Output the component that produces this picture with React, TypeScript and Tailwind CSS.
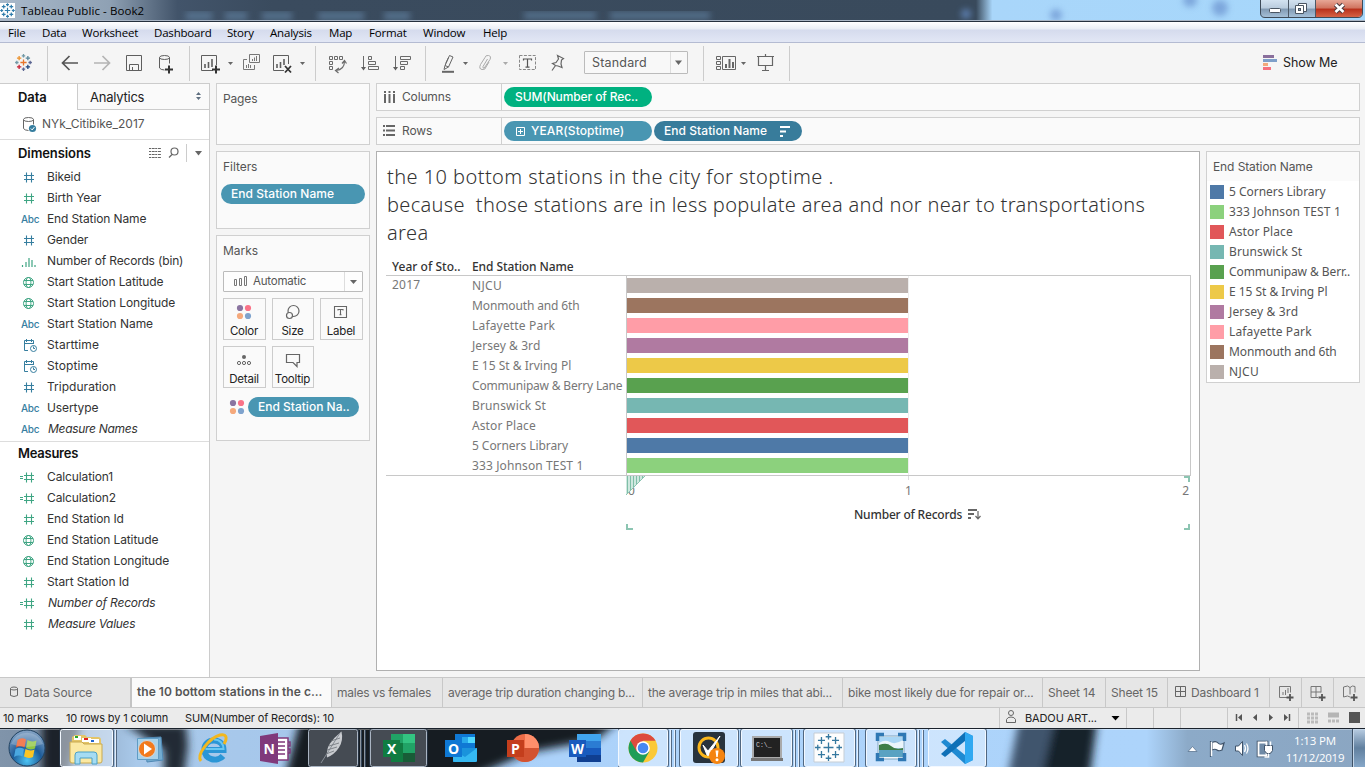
import type { ReactNode } from 'react';

type DrawProps = { x: number; y: number; w: number; h: number; className?: string; children?: ReactNode };

/** Inline drawing whose viewBox is expressed in window coordinates. */
function Draw({ x, y, w, h, className = '', children }: DrawProps) {
  return (
    <svg width={w} height={h} viewBox={`${x} ${y} ${w} ${h}`} fill="none" className={`block shrink-0 ${className}`}>
      {children}
    </svg>
  );
}

const G = '#666';

/* ---------- title bar and menu ---------- */

function TableauCross({ cx, cy, s, colors, w = 1 }: { cx: number; cy: number; s: number; colors: string[]; w?: number }) {
  const pts = [
    [0, 0, 1.35], [0, -2.9, 0.75], [0, 2.9, 0.75], [-2.9, 0, 0.75], [2.9, 0, 0.75],
    [-1.9, -1.9, 0.95], [1.9, -1.9, 0.95], [-1.9, 1.9, 0.95], [1.9, 1.9, 0.95],
  ];
  return (
    <>
      {pts.map(([x, y, r], i) => (
        <path
          key={i}
          d={`M${cx + x * s - r * s} ${cy + y * s}h${2 * r * s}M${cx + x * s} ${cy + y * s - r * s}v${2 * r * s}`}
          stroke={colors[i % colors.length]}
          strokeWidth={w}
        />
      ))}
    </>
  );
}

function TitleBar() {
  return (
    <div className="relative flex h-[21px] shrink-0 overflow-hidden border-b border-[#a9b5c4] bg-[#394a5c]">
      <Draw x={0} y={0} w={1365} h={21} className="absolute inset-0">
        <defs>
          <linearGradient id="tb" x1="0" x2="1365" y1="0" y2="0" gradientUnits="userSpaceOnUse">
            <stop offset="0" stopColor="#a9b9ca" />
            <stop offset=".08" stopColor="#8fa1b4" />
            <stop offset=".13" stopColor="#42546a" />
            <stop offset=".2" stopColor="#3a4b5e" />
            <stop offset=".715" stopColor="#394a5c" />
            <stop offset=".727" stopColor="#a9d6fa" />
            <stop offset="1" stopColor="#a6d7fb" />
          </linearGradient>
          <linearGradient id="cb" x1="0" x2="0" y1="0" y2="18" gradientUnits="userSpaceOnUse">
            <stop offset="0" stopColor="#d3e2f0" />
            <stop offset=".45" stopColor="#b9cbdd" />
            <stop offset=".5" stopColor="#8199b2" />
            <stop offset="1" stopColor="#a9c4dc" />
          </linearGradient>
          <linearGradient id="cx" x1="0" x2="0" y1="0" y2="18" gradientUnits="userSpaceOnUse">
            <stop offset="0" stopColor="#e7a796" />
            <stop offset=".45" stopColor="#d0735f" />
            <stop offset=".5" stopColor="#b8301b" />
            <stop offset="1" stopColor="#d9694a" />
          </linearGradient>
          <filter id="soft"><feGaussianBlur stdDeviation="3" /></filter>
        </defs>
        <rect width="1365" height="21" fill="url(#tb)" />
        <g filter="url(#soft)" fill="#5f7f9e" opacity=".75">
          <rect x="186" y="12" width="26" height="8" /><rect x="225" y="12" width="22" height="8" /><rect x="262" y="12" width="30" height="8" />
          <rect x="318" y="12" width="46" height="8" /><rect x="384" y="12" width="26" height="8" /><rect x="524" y="12" width="72" height="7" />
          <rect x="610" y="12" width="100" height="7" />
        </g>
        <g filter="url(#soft)" fill="#6b93cf" opacity=".7">
          <circle cx="1056" cy="15" r="6" /><circle cx="1190" cy="0" r="7" /><circle cx="1220" cy="8" r="8" /><circle cx="966" cy="14" r="5" />
        </g>
        <path d="M1260.500 0V13q0 4.500 4.500 4.500H1358q4.500 0 4.500-4.500V0" fill="url(#cb)" stroke="#3d4a58" />
        <path d="M1316 0V17h42q4-.5 4-4V0Z" fill="url(#cx)" />
        <path d="M1288.500 0v17M1315.500 0v17" stroke="#4c5866" />
        <rect x="1269.500" y="8.500" width="11" height="4" rx="1" fill="#fff" stroke="#4a5562" />
        <path d="M1298.500 3.500h8v8h-8Z" fill="#fff" stroke="#4a5562" />
        <path d="M1295.500 5.500h8v8h-8Z" fill="#fff" stroke="#4a5562" />
        <rect x="1298.500" y="8.500" width="2" height="2" fill="#8fa5ba" stroke="#4a5562" />
        <path d="M1335.500 4.500l8 7.500M1343.500 4.500l-8 7.500" stroke="#4a3b40" strokeWidth="4.600" />
        <path d="M1335.500 4.500l8 7.500M1343.500 4.500l-8 7.500" stroke="#fff" strokeWidth="2.600" />
        <rect x="0" y="3" width="15" height="15" fill="#fff" />
        <TableauCross cx={7.500} cy={10.500} s={2} colors={['#2f7cab']} w={1.200} />
      </Draw>
      <span className="relative ml-[21px] h-[21px] font-['Open_Sans'] text-[11.500px] leading-[21px] tracking-[0.080px] text-black">Tableau Public - Book2</span>
    </div>
  );
}

const menus: [string, string][] = [
  ['File', 'w-[34px]'], ['Data', 'w-[40px]'], ['Worksheet', 'w-[72px]'], ['Dashboard', 'w-[73px]'], ['Story', 'w-[43px]'],
  ['Analysis', 'w-[59px]'], ['Map', 'w-[40px]'], ['Format', 'w-[54px]'], ['Window', 'w-[60px]'], ['Help', 'w-[40px]'],
];

function MenuBar() {
  return (
    <div className="flex h-[22px] shrink-0 items-center border-t border-b border-t-[#25303d] border-b-[#b4bbd2] bg-[linear-gradient(#ffffff_0px,#e9edf5_7px,#d5dbed_8px,#e2e7f5_20px)] pt-[2px] pl-[8px] font-['Open_Sans'] text-[11.500px] tracking-[-0.190px] text-black">
      {menus.map(([m, w]) => (
        <span key={m} className={w}>{m}</span>
      ))}
    </div>
  );
}

/* ---------- toolbar ---------- */

function Caret({ x, y, c = G }: { x: number; y: number; c?: string }) {
  return <path d={`M${x} ${y}h5l-2.500 3Z`} fill={c} />;
}

function Toolbar() {
  return (
    <div className="flex h-[40px] shrink-0 bg-[#f5f5f5]">
      <Draw x={0} y={43} w={48} h={40}>
        <TableauCross cx={23.500} cy={62.500} s={2.300} w={1.300} colors={['#e8762c', '#7199a6', '#5c6692', '#7199a6', '#5b6591', '#eb912c', '#59879b', '#c72035', '#1f447e']} />
        <path d="M47.500 46v35" stroke="#ccc" />
      </Draw>
      <Draw x={48} y={43} w={142} h={40}>
        <path d="M78 63H63M69.500 56l-7 7 7 7" stroke="#555" strokeWidth="1.700" />
        <path d="M94 63h15M102.500 56l7 7-7 7" stroke="#b4b4b4" strokeWidth="1.700" />
        <path d="M126.500 55.500h15v15h-15ZM129.500 70v-5.500h9V70M132.500 67v3" stroke="#5e5e5e" />
        <ellipse cx="164.500" cy="57.500" rx="5" ry="2" stroke="#5e5e5e" />
        <path d="M159.500 57.500V68q1 1.800 5 2M169.500 57.500v6" stroke="#5e5e5e" />
        <path d="M165 69.500h8M169 65.500v8" stroke="#333" strokeWidth="2" />
        <path d="M189.500 46v35" stroke="#ccc" />
      </Draw>
      <Draw x={190} y={43} w={126} h={40}>
        <path d="M213 70.500H201.500v-15h15V65" stroke="#5e5e5e" />
        <path d="M205 64v4M208.500 62v6M212 59v8" stroke="#5e5e5e" strokeWidth="1.600" />
        <path d="M212 69.500h8M216 65.500v8" stroke="#333" strokeWidth="2" />
        <Caret x={228} y={62} />
        <path d="M249.500 54.500h10v8h-10ZM247 59.500h-3.500v10h11V65" stroke="#777" />
        <path d="M252.500 59v2M254.500 57.500v3.500M256.500 56v5M246.500 65v3M248.500 64v4M250.500 65v3" stroke="#777" />
        <path d="M284 70.500H273.500v-15h15V64" stroke="#5e5e5e" />
        <path d="M277 64v4M280.500 62v6M284 59v6" stroke="#5e5e5e" strokeWidth="1.600" />
        <path d="M285 66l6 6.500M291 66l-6 6.500" stroke="#333" strokeWidth="1.800" />
        <Caret x={300} y={62} />
        <path d="M315.500 46v35" stroke="#ccc" />
      </Draw>
      <Draw x={316} y={43} w={110} h={40}>
        <path d="M329.500 56.500h3v3h-3ZM334.500 56.500h3v3h-3ZM339.500 56.500h3v3h-3ZM329.500 61.500h3v3h-3ZM329.500 66.500h3v3h-3Z" stroke="#6a6a6a" />
        <path d="M344.500 61c0 6-3 9-8.500 9.500M342 63.500l2.500-3 2 3M339 68l-3.500 2.500 3 2.500" stroke="#6a6a6a" strokeWidth="1.200" />
        <path d="M363.500 56v13M368.500 56.500h3v3h-3ZM368.500 61.500h7v3h-7ZM368.500 66.500h10v3h-10Z" stroke="#6a6a6a" />
        <path d="M361 67h5l-2.500 3.500Z" fill="#5e5e5e" />
        <path d="M395.500 56v13M400.500 56.500h10v3h-10ZM400.500 61.500h7v3h-7ZM400.500 66.500h4v3h-4Z" stroke="#6a6a6a" />
        <path d="M393 67h5l-2.500 3.500Z" fill="#5e5e5e" />
        <path d="M425.500 46v35" stroke="#ccc" />
      </Draw>
      <Draw x={426} y={43} w={158} h={40}>
        <path d="M442 71.800h12" stroke="#666" strokeWidth="2" />
        <path d="M449.500 55.500l3.500 1.500-4.500 10-3.500-1.500ZM445 65.500l-1 4 4.500-2.500M448.500 57.500l-2.800 6" stroke="#666" />
        <Caret x={463} y={62} />
        <path d="M487.500 59l-4.500 7.500q-.5 2 1.200 1.600l5.800-8.600q1.500-3.500-1.500-4t-3.500 2l-4.500 7q-2 4.500 1.500 5t4-2.500l3-5" stroke="#aaa" />
        <Caret x={503} y={62} c="#aaa" />
        <rect x="519.500" y="55.500" width="16" height="14" stroke="#888" strokeDasharray="3 1.400" />
        <path d="M523.500 60.500v-1.500h8v1.500M527.500 59v8M525.500 67.200h4" stroke="#555" strokeWidth="1.200" />
        <path d="M557.500 55.500l6 3-2 1.500-.5 4 1 3.500-4-1.500-2.500-.5-3-2 3.500-1 2.500-3.500ZM555.500 65.500l-3.500 5" stroke="#666" strokeWidth="1.200" />
      </Draw>
      <div className="mt-[8px] flex h-[23px] w-[104px] items-center rounded-[1px] border border-[#bbb] bg-[#f8f8f8] font-['Inter'] text-[12.500px] tracking-[0.180px] text-[#555]">
        <span className="w-[85px] pt-px pl-[7px]">Standard</span>
        <span className="h-full w-px bg-[#ddd]" />
        <Draw x={671} y={52} w={16} h={21}><path d="M675 60.500h7l-3.500 4.500Z" fill={G} /></Draw>
      </div>
      <Draw x={688} y={43} w={112} h={40}>
        <path d="M703.500 46v35M789.500 46v35" stroke="#ccc" />
        <path d="M716.500 56.500h4v3h-4ZM716.500 61.500h4v3h-4ZM716.500 66.500h4v3h-4ZM722.500 56.500h13v13h-13Z" stroke="#666" />
        <path d="M726 64v4M729.500 59v9M733 62v6" stroke="#666" strokeWidth="2" />
        <Caret x={741} y={62} />
        <path d="M757 56.500h17M758.500 56.500v9h14v-9M765.500 66v4M762 70.500h7M765.500 54v2" stroke="#666" strokeWidth="1.200" />
      </Draw>
      <div className="flex-1" />
      <Draw x={1263} y={43} w={20} h={40}>
        <path d="M1263 55h11v3h-11Z" fill="#8a6f9c" /><path d="M1263 59h14v3h-14Z" fill="#7e9fc9" />
        <path d="M1263 63h5v3h-5Z" fill="#f2a97c" /><path d="M1263 67h8v3h-8Z" fill="#f5717f" />
      </Draw>
      <span className="w-[82px] font-['Inter'] text-[12.500px] leading-[40px] tracking-[-0.080px] text-[#222]">Show Me</span>
    </div>
  );
}

/* ---------- data pane ---------- */

const BLUE = '#367e9f';
const GREEN = '#3fa583';

type Kind = 'num' | 'gnum' | 'calc' | 'abc' | 'bin' | 'geo' | 'date';

function FieldIcon({ kind }: { kind: Kind }) {
  if (kind === 'abc') return <span className="w-[29px] pl-[3px] font-['Inter'] text-[10px] leading-[20px] font-medium tracking-[-0.300px] text-[#367e9f]">Abc</span>;
  const c = kind === 'num' || kind === 'date' ? BLUE : GREEN;
  return (
    <Draw x={0} y={0} w={29} h={21}>
      {(kind === 'num' || kind === 'gnum' || kind === 'calc') && <path d="M6 8.500h10M6 12.500h10M8.500 5.500v10M13.500 5.500v10" stroke={c} strokeWidth="1.100" />}
      {kind === 'calc' && <path d="M2 9.500h3M2 11.500h3" stroke={c} />}
      {kind === 'bin' && <path d="M4.500 14v2M8 11v5M11 7v9M14 9v7M17 14v2" stroke={c} strokeWidth="1.200" />}
      {kind === 'geo' && (
        <g stroke={c}>
          <circle cx="10.500" cy="10.500" r="5" /><ellipse cx="10.500" cy="10.500" rx="2.400" ry="5" /><path d="M6 8.500h9M6 12.500h9" />
        </g>
      )}
      {kind === 'date' && (
        <g stroke={c}>
          <path d="M10 15.500H6.500v-10h9v3M6 8.500h10M8.500 4v3M13.500 4v3" /><circle cx="15.500" cy="13.500" r="3" /><path d="M15.500 11.500v2h1.500" />
        </g>
      )}
    </Draw>
  );
}

type Field = [Kind, string, string];

const dimensions: Field[] = [
  ['num', 'Bikeid', ''], ['gnum', 'Birth Year', ''], ['abc', 'End Station Name', ''], ['num', 'Gender', ''],
  ['bin', 'Number of Records (bin)', 'tracking-[-0.160px]'], ['geo', 'Start Station Latitude', ''], ['geo', 'Start Station Longitude', 'tracking-[-0.080px]'],
  ['abc', 'Start Station Name', 'tracking-[-0.030px]'], ['date', 'Starttime', 'tracking-[0.100px]'], ['date', 'Stoptime', 'tracking-[0.100px]'], ['num', 'Tripduration', 'tracking-[0.020px]'],
  ['abc', 'Usertype', ''], ['abc', 'Measure Names', 'pl-px italic tracking-[-0.300px]'],
];

const measures: Field[] = [
  ['calc', 'Calculation1', ''], ['calc', 'Calculation2', ''], ['gnum', 'End Station Id', ''], ['geo', 'End Station Latitude', ''],
  ['geo', 'End Station Longitude', ''], ['gnum', 'Start Station Id', ''], ['calc', 'Number of Records', 'pl-px italic tracking-[-0.180px]'],
  ['gnum', 'Measure Values', 'pl-px italic tracking-[-0.300px]'],
];

function Fields({ items }: { items: Field[] }) {
  return (
    <div className="flex flex-col pt-px pl-[18px] font-['Inter'] text-[12px] leading-[20px] tracking-[-0.120px] text-[#333]">
      {items.map(([k, t, cls]) => (
        <div key={t} className="flex h-[21px]">
          <FieldIcon kind={k} />
          <span className={cls}>{t}</span>
        </div>
      ))}
    </div>
  );
}

function DataPane() {
  return (
    <div className="flex w-[210px] shrink-0 flex-col border-t border-r border-[#ccc] bg-white font-['Inter']">
      <div className="flex h-[26px] text-[13px] leading-[26px]">
        <span className="w-[77px] pl-[18px] font-semibold tracking-[-0.100px] text-[#111]">Data</span>
        <div className="flex flex-1 border-b border-l border-[#ccc] bg-[#fafafa]">
          <span className="flex-1 pl-[12px] tracking-[-0.240px] text-[#222]">Analytics</span>
          <Draw x={195} y={84} w={14} h={26}><path d="M196 95h5l-2.500-3ZM196 97h5l-2.500 3Z" fill="#5f6f80" /></Draw>
        </div>
      </div>
      <div className="flex h-[30px] border-b border-[#ddd]">
        <Draw x={0} y={110} w={42} h={29}>
          <ellipse cx="28.500" cy="119.500" rx="5" ry="2" stroke="#666" />
          <path d="M23.500 119.500v9q1 1.800 5 2M33.500 119.500v5" stroke="#666" />
          <circle cx="32.500" cy="128.500" r="3.600" fill="#367e9f" />
          <path d="M30.800 128.500l1.400 1.400 2.200-2.800" stroke="#fff" />
        </Draw>
        <span className="text-[12px] leading-[28px] tracking-[-0.020px] text-[#555]">NYk_Citibike_2017</span>
      </div>
      <div className="flex h-[26px] pl-[18px]">
        <span className="flex-1 text-[13px] leading-[27px] font-semibold tracking-[-0.080px] text-[#111]">Dimensions</span>
        <Draw x={148} y={140} w={61} h={26}>
          <path d="M149 148.500h12M149 151.500h12M149 154.500h12M149 157.500h12" stroke="#666" strokeDasharray="2 .7 3 .5" />
          <circle cx="174.500" cy="151.500" r="3.500" stroke="#666" strokeWidth="1.200" /><path d="M172 154.500l-3 3" stroke="#666" strokeWidth="1.300" />
          <path d="M186.500 144v18" stroke="#ccc" /><path d="M195 151h7l-3.500 4.500Z" fill="#666" />
        </Draw>
      </div>
      <Fields items={dimensions} />
      <div className="mt-px h-[25px] border-t border-[#ddd] pl-[18px] text-[13px] leading-[23px] font-semibold tracking-[-0.250px] text-[#111]">Measures</div>
      <Fields items={measures} />
    </div>
  );
}

/* ---------- cards column ---------- */

function Dots({ x, y }: { x: number; y: number }) {
  return (
    <>
      <circle cx={x} cy={y} r="3.100" fill="#8a74a0" /><circle cx={x + 8} cy={y} r="3.100" fill="#fa7388" />
      <circle cx={x} cy={y + 8} r="3.100" fill="#f5a97c" /><circle cx={x + 8} cy={y + 8} r="3.100" fill="#7fa3cd" />
    </>
  );
}

const btn = 'flex h-[42px] flex-col items-center justify-between border border-[#ccc] bg-[#fafafa] pt-[4px] pr-px text-[11.500px] leading-[15px] tracking-[-0.220px] text-[#222]';

function Cards() {
  return (
    <div className="ml-[6px] flex w-[154px] shrink-0 flex-col gap-[6px] font-['Inter'] text-[12px] text-[#555]">
      <div className="h-[62px] border border-[#d0d0d0] bg-[#fafafa] pl-[6px] leading-[30px] tracking-[-0.150px]">Pages</div>
      <div className="h-[78px] border border-[#d0d0d0] bg-[#fafafa]">
        <div className="h-[32px] pl-[6px] leading-[30px] tracking-[-0.050px]">Filters</div>
        <div className="ml-[4px] h-[20px] w-[144px] rounded-full bg-[#4996b2] pl-[10px] text-[12px] leading-[19px] font-medium tracking-[0.060px] text-white">End Station Name</div>
      </div>
      <div className="h-[206px] border border-[#d0d0d0] bg-[#fafafa] px-[6px]">
        <div className="h-[35px] leading-[30px]">Marks</div>
        <div className="flex h-[21px] w-[140px] items-center rounded-[1px] border border-[#bbb] bg-white/60">
          <Draw x={224} y={272} w={29} h={19}><path d="M234.500 279.500h2v6h-2ZM239.500 278.500h2v7h-2ZM244.500 276.500h2v9h-2Z" stroke="#777" /></Draw>
          <span className="w-[91px] pt-px text-[11.500px] tracking-[-0.200px]">Automatic</span>
          <span className="h-full w-px bg-[#ddd]" />
          <Draw x={345} y={272} w={17} h={19}><path d="M350 280h7l-3.500 4Z" fill="#666" /></Draw>
        </div>
        <div className="mt-[6px] grid w-[140px] grid-cols-[43px_42px_43px] gap-x-[6px] gap-y-[6px]">
          <div className={btn}>
            <Draw x={234} y={303} w={20} h={18}><Dots x={240} y={308} /></Draw>Color
          </div>
          <div className={btn}>
            <Draw x={284} y={303} w={18} h={18}><circle cx="293.500" cy="311" r="5.500" stroke="#666" strokeWidth="1.200" /><circle cx="289.500" cy="315.500" r="3" fill="#fafafa" stroke="#666" strokeWidth="1.200" /></Draw>Size
          </div>
          <div className={btn}>
            <Draw x={331} y={303} w={20} h={18}><path d="M334.500 306.500h12v11h-12ZM338 310.500v-1h5v1M340.500 309.500v5M339.500 314.800h2" stroke="#666" strokeWidth="1.100" /></Draw>Label
          </div>
          <div className={btn}>
            <Draw x={234} y={351} w={20} h={18}><circle cx="244" cy="357" r="2" fill="#666" /><circle cx="239" cy="363" r="1.600" stroke="#666" /><circle cx="244" cy="363" r="1.600" stroke="#666" /><circle cx="249" cy="363" r="1.600" stroke="#666" /></Draw>Detail
          </div>
          <div className={`${btn} whitespace-nowrap`}>
            <Draw x={283} y={351} w={20} h={18}><path d="M286.500 354.500h13v8h-2.500v4l-4-4h-6.500Z" stroke="#666" strokeWidth="1.200" /></Draw>Tooltip
          </div>
        </div>
        <div className="mt-[9px] flex">
          <Draw x={223} y={397} w={25} h={20}><Dots x={233} y={403} /></Draw>
          <div className="h-[20px] w-[111px] rounded-full bg-[#4996b2] pl-[10px] text-[12px] leading-[19px] font-medium text-white">End Station Na..</div>
        </div>
      </div>
    </div>
  );
}

/* ---------- shelves, sheet and legend ---------- */

const pill = 'flex h-[20px] w-[148px] items-center rounded-full font-medium text-white pb-px';

function Shelves() {
  return (
    <div className="mb-[6px] flex w-[984px] flex-col gap-[6px] font-['Inter'] text-[12px] text-[#555]">
      <div className="flex h-[28px] items-center border border-[#d0d0d0] bg-[#fafafa]">
        <Draw x={377} y={84} w={25} h={26}><path d="M385 91v2M385 94v9M389.500 91v2M389.500 94v9M394 91v2M394 94v9" stroke="#666" strokeWidth="2" /></Draw>
        <span className="w-[99px] tracking-[-0.150px]">Columns</span>
        <span className="mr-[2px] h-full w-px bg-[#d0d0d0]" />
        <div className={`${pill} bg-[#00b180] pl-[11px] tracking-[-0.110px]`}>SUM(Number of Rec..</div>
      </div>
      <div className="flex h-[28px] items-center border border-[#d0d0d0] bg-[#fafafa]">
        <Draw x={377} y={118} w={25} h={26}><path d="M383 126h2M386 126h9M383 130.500h2M386 130.500h9M383 135h2M386 135h9" stroke="#666" strokeWidth="2" /></Draw>
        <span className="w-[99px] tracking-[-0.150px]">Rows</span>
        <span className="mr-[2px] h-full w-px bg-[#d0d0d0]" />
        <div className={`${pill} mr-[2px] bg-[#4996b2] tracking-[0.100px]`}>
          <Draw x={504} y={121} w={27} h={19}><path d="M516.500 127.500h8v8h-8ZM518 131.500h5M520.500 129v5" stroke="#fff" /></Draw>
          YEAR(Stoptime)
        </div>
        <div className={`${pill} bg-[#387c9b] pl-[10px] tracking-[0.060px]`}>
          <span className="w-[115px]">End Station Name</span>
          <Draw x={779} y={121} w={12} h={19}><path d="M780 127h10M780 131.500h6M780 136h3" stroke="#fff" strokeWidth="2" /></Draw>
        </div>
      </div>
    </div>
  );
}

const stations: [string, string, string][] = [
  ['NJCU', 'bg-[#bab0ac]', 'tracking-[0.300px]'],
  ['Monmouth and 6th', 'bg-[#9c755f]', 'tracking-[-0.130px]'],
  ['Lafayette Park', 'bg-[#ff9da7]', 'tracking-[0.180px]'],
  ['Jersey & 3rd', 'bg-[#b07aa1]', 'tracking-[0.080px]'],
  ['E 15 St & Irving Pl', 'bg-[#edc948]', 'tracking-[0.010px]'],
  ['Communipaw & Berry Lane', 'bg-[#59a14f]', 'tracking-[-0.190px]'],
  ['Brunswick St', 'bg-[#76b7b2]', 'tracking-[0.150px]'],
  ['Astor Place', 'bg-[#e15759]', 'tracking-[0.100px]'],
  ['5 Corners Library', 'bg-[#4e79a7]', 'tracking-[-0.060px]'],
  ['333 Johnson TEST 1', 'bg-[#8cd17d]', 'tracking-[0.120px]'],
];

const legend: [string, string, string][] = [
  ['5 Corners Library', 'bg-[#4e79a7]', 'tracking-[-0.030px]'],
  ['333 Johnson TEST 1', 'bg-[#8cd17d]', 'tracking-[0.150px]'],
  ['Astor Place', 'bg-[#e15759]', 'tracking-[0.100px]'],
  ['Brunswick St', 'bg-[#76b7b2]', 'tracking-[0.100px]'],
  ['Communipaw & Berr..', 'bg-[#59a14f]', 'tracking-[-0.080px]'],
  ['E 15 St & Irving Pl', 'bg-[#edc948]', 'tracking-[-0.030px]'],
  ['Jersey & 3rd', 'bg-[#b07aa1]', 'tracking-[0.150px]'],
  ['Lafayette Park', 'bg-[#ff9da7]', 'tracking-[0.150px]'],
  ['Monmouth and 6th', 'bg-[#9c755f]', 'tracking-[-0.120px]'],
  ['NJCU', 'bg-[#bab0ac]', 'tracking-[0.300px]'],
];

function Sheet() {
  return (
    <div className="flex h-[520px] w-[824px] flex-col border border-[#b0b0b0] bg-white pt-[11px] pl-[10px] font-['Noto_Sans']">
      <h1 className="text-[20px] leading-[28px] font-light text-[#333]">
        <span className="block tracking-[0.430px]">the 10 bottom stations in the city for stoptime .</span>
        <span className="block tracking-[0.310px] whitespace-pre">because  those stations are in less populate area and nor near to transportations</span>
        <span className="block tracking-[0.400px]">area</span>
      </h1>
      <div className="ml-[-1px] flex w-[805px] flex-col">
        <div className="mt-[11px] flex h-[18px] border-b border-[#c8c8c8] text-[12px] leading-[17px] font-medium tracking-[-0.090px] text-[#333]">
          <span className="w-[86px] pl-[6px] tracking-[0.040px]">Year of Sto..</span>
          <span>End Station Name</span>
        </div>
        <div className="flex h-[200px] border-b border-[#c8c8c8] text-[12px] text-[#777]">
          <span className="w-[86px] pl-[6px] leading-[18px] tracking-[0.250px]">2017</span>
          <div className="flex w-[154px] flex-col">
            {stations.map(([n, , t]) => (
              <span key={n} className={`h-[20px] shrink-0 leading-[19px] whitespace-nowrap ${t}`}>{n}</span>
            ))}
          </div>
          <div className="flex flex-1 border-x border-[#c8c8c8]">
            <div className="flex w-[282px] flex-col gap-[5px] border-r border-[#eee] pt-[2px]">
              {stations.map(([n, c]) => (
                <div key={n} className={`h-[15px] w-[281px] shrink-0 ${c}`} />
              ))}
            </div>
          </div>
        </div>
        <div className="relative ml-[240px] flex h-[55px] flex-col text-[12px] text-[#777]">
          <div className="flex h-[28px] justify-between pr-[2px] pl-[2px] leading-[29px]">
            <span>0</span><span>1</span><span>2</span>
          </div>
          <div className="flex h-[21px] justify-center gap-[5px] pl-[18px] leading-[21px] font-medium tracking-[-0.190px] text-[#333]">
            <span className="w-[108px] whitespace-nowrap">Number of Records</span>
            <Draw x={967} y={504} w={14} h={20}><path d="M968 510h9M968 514h6M968 518h3" stroke="#666" strokeWidth="1.800" /><path d="M978 511v7M975.500 516l2.500 2.800 2.500-2.800" stroke="#666" strokeWidth="1.200" /></Draw>
          </div>
          <Draw x={626} y={476} w={565} h={55} className="absolute inset-0">
            <path d="M626 476h19L626 495Z" fill="#cfe8df" />
            <path d="M627.500 476v18M630.500 476v14M633.500 476v11M636.500 476v8M639.500 476v5M642.500 476v2" stroke="#7fbfa8" />
            <path d="M645 476L626 495" stroke="#8cc5b2" />
            <path d="M908.500 476v4" stroke="#ddd" />
            <path d="M1184 477h5v5M627 524v5h6M1184 529h5v-5" stroke="#8cc5b2" strokeWidth="2" />
          </Draw>
        </div>
      </div>
    </div>
  );
}

function Legend() {
  return (
    <div className="ml-[6px] h-[232px] w-[154px] overflow-hidden border border-[#d0d0d0] bg-white font-['Noto_Sans'] text-[12px] text-[#555]">
      <div className="mb-px h-[29px] bg-[#fafafa] pl-[6px] font-['Inter'] leading-[30px] tracking-[-0.100px]">End Station Name</div>
      {legend.map(([n, c, t]) => (
        <div key={n} className="flex h-[20px] items-center pl-[3px]">
          <span className={`mr-[5px] h-[14px] w-[14px] ${c}`} />
          <span className={`whitespace-nowrap ${t}`}>{n}</span>
        </div>
      ))}
    </div>
  );
}

/* ---------- tabs and status ---------- */

const tab = 'flex items-center border-r border-[#c8c8c8] pl-[5px] whitespace-nowrap';

function Tabs() {
  return (
    <div className="flex h-[31px] shrink-0 border-t border-b border-[#c8c8c8] bg-[#e6e6e6] font-['Inter'] text-[12px] text-[#666]">
      <div className="flex w-[132px] items-center border-r-2 border-[#c4c4c4]">
        <Draw x={0} y={678} w={24} h={29}><ellipse cx="14" cy="688.500" rx="3.500" ry="1.500" stroke="#666" /><path d="M10.500 688.500v7q3.500 2 7 0v-7" stroke="#666" /></Draw>
        <span className="tracking-[-0.130px]">Data Source</span>
      </div>
      <div className={`${tab} w-[200px] bg-[#fafafa] pb-[2px] font-semibold tracking-[0.020px] text-[#555]`}>the 10 bottom stations in the c...</div>
      <div className={`${tab} w-[111px] tracking-[-0.240px]`}>males vs females</div>
      <div className={`${tab} w-[200px] tracking-[-0.240px]`}>average trip duration changing b...</div>
      <div className={`${tab} w-[200px] tracking-[-0.200px]`}>the average trip in miles that abi...</div>
      <div className={`${tab} w-[200px] tracking-[-0.180px]`}>bike most likely due for repair or...</div>
      <div className={`${tab} w-[63px] tracking-[-0.180px]`}>Sheet 14</div>
      <div className={`${tab} w-[62px] tracking-[-0.180px]`}>Sheet 15</div>
      <div className="flex w-[102px] items-center border-r border-[#c8c8c8] tracking-[-0.230px] whitespace-nowrap">
        <Draw x={1168} y={678} w={23} h={29}><path d="M1175.500 686.500h10v10h-10ZM1180.500 686.500v10M1175.500 691.500h10" stroke="#666" /></Draw>
        Dashboard 1
      </div>
      <Draw x={1270} y={678} w={95} h={29}>
        <path d="M1287 697.500h-7.500v-11h11v6M1283 692v3M1285.500 690v5M1288 688v5" stroke="#777" />
        <path d="M1318 697.500h-7v-11h10v6M1316 686.500v11M1311 692h10" stroke="#777" />
        <path d="M1350 697l-2.500-1-4 1v-10l4-1 2.500 1.500 2.500-1.500 2.500.5v6M1350 687.500v7" stroke="#777" />
        <path d="M1286.500 697.500h7M1290 694v7M1318.500 697.500h7M1322 694v7M1350.500 697.500h7M1354 694v7" stroke="#555" strokeWidth="1.800" />
        <path d="M1301.500 678v29M1333.500 678v29" stroke="#c8c8c8" />
      </Draw>
    </div>
  );
}

function StatusBar() {
  return (
    <div className="flex h-[20px] shrink-0 items-center bg-[#ebebeb] font-['Inter'] text-[11px] tracking-[-0.120px] text-[#222]">
      <span className="w-[66px] pl-[3px]">10 marks</span>
      <span className="w-[119px]">10 rows by 1 column</span>
      <span className="flex-1">SUM(Number of Records): 10</span>
      <Draw x={999} y={708} w={26} h={20}>
        <path d="M999.500 708v20" stroke="#c8c8c8" /><circle cx="1011" cy="713" r="2.500" stroke="#666" /><path d="M1006.500 722.500v-3q1-2.500 4.500-2.500t4.500 2.500v3Z" stroke="#666" />
      </Draw>
      <span className="w-[85px]">BADOU ART...</span>
      <Draw x={1110} y={708} w={255} h={20}>
        <path d="M1111.500 716h8l-4 4.500Z" fill="#000" />
        <path d="M1126.500 708v20M1153.500 708v20M1180.500 708v20M1227.500 708v20M1298.500 708v20" stroke="#c8c8c8" />
        <path d="M1236.500 714v7" stroke="#555" strokeWidth="1.500" /><path d="M1242 714v7l-4-3.500ZM1257 714v7l-4-3.500ZM1269 714v7l4-3.500ZM1284 714v7l4-3.500Z" fill="#555" /><path d="M1289.500 714v7" stroke="#555" strokeWidth="1.500" />
        <path d="M1307 714h11M1307 718h11M1307 722h11" stroke="#bbb" strokeWidth="3" strokeDasharray="3 1" />
        <path d="M1328 715h11" stroke="#b5b5b5" strokeWidth="5" /><path d="M1328 721h11" stroke="#bbb" strokeWidth="3" strokeDasharray="3 1" />
        <path d="M1349 712h11v11h-11Z" fill="#555" />
      </Draw>
    </div>
  );
}

/* ---------- Windows taskbar ---------- */

function Wallpaper() {
  return (
    <Draw x={0} y={729} w={1365} h={38} className="absolute inset-0">
      <defs>
        <filter id="blur" x="-10%" y="-50%" width="120%" height="200%"><feGaussianBlur stdDeviation="4" /></filter>
        <linearGradient id="wl" x1="0" x2="1365" y1="0" y2="0" gradientUnits="userSpaceOnUse">
          <stop offset="0" stopColor="#8094aa" /><stop offset=".03" stopColor="#7b8fa6" /><stop offset=".1" stopColor="#a9c9ea" /><stop offset=".25" stopColor="#a5c7ec" />
          <stop offset=".4" stopColor="#acd2fa" /><stop offset=".84" stopColor="#add4fb" /><stop offset=".87" stopColor="#8caac8" /><stop offset="1" stopColor="#8ba6c2" />
        </linearGradient>
      </defs>
      <rect y="729" width="1365" height="38" fill="url(#wl)" />
      <g filter="url(#blur)">
        <path d="M42 720h40l-14 55H42Z" fill="#1c232c" />
        <path d="M124 724h62l2 22 -4 30h-20l0-26Z" fill="#222b36" />
        <path d="M300 720H620l-24 20-66 12-58 25H285Z" fill="#131a22" />
        <path d="M1020 715h62l-14 60h-60Z" fill="#41556d" />
        <path d="M1056 715h42l-8 60h-48Z" fill="#18202b" />
      </g>
      <path d="M0 729.500h1365" stroke="#fff" opacity=".35" />
    </Draw>
  );
}

function Frame({ x, w, dark = false, stack = 0 }: { x: number; w: number; dark?: boolean; stack?: number }) {
  const line = dark ? '#a9b4c2' : '#f2f8ff';
  return (
    <>
      <rect x={x + 0.500} y="729.500" width={w - 1} height="37" rx="2" fill={dark ? '#8b939d' : '#e7f2ff'} fillOpacity={dark ? 0.400 : 0.550} stroke={line} />
      <rect x={x - 0.500} y="728.500" width={w + 1} height="39" rx="2.500" stroke="#29394d" strokeOpacity=".7" />
      {Array.from({ length: stack }, (_, i) => (
        <path key={`l${i}`} d={`M${x + w + 2.500 + i * 4} 730v37`} stroke={line} strokeOpacity=".8" />
      ))}
      {Array.from({ length: stack }, (_, i) => (
        <path key={`d${i}`} d={`M${x + w + 3.500 + i * 4} 730v37`} stroke="#3c5068" strokeOpacity=".8" />
      ))}
    </>
  );
}

const glyph = "font-['Open_Sans'] font-bold";

function Taskbar() {
  return (
    <div className="relative flex h-[39px] shrink-0 overflow-hidden border-t border-[#1a222c]">
      <Wallpaper />
      <Draw x={0} y={729} w={308} h={38} className="relative">
        <defs>
          <radialGradient id="orb" cx=".5" cy=".85" r=".8"><stop offset="0" stopColor="#4cc4f4" /><stop offset=".5" stopColor="#1d5c9a" /><stop offset="1" stopColor="#7f9fc2" /></radialGradient>
        </defs>
        <circle cx="27" cy="748" r="18" fill="url(#orb)" stroke="#20415f" />
        <path d="M17.500 740q4-3 8.500-.5l-1.500 8q-4.500-2.500-8.500 0Z" fill="#ef5a24" />
        <path d="M27.500 740q4 2.500 9 .5l-1.500 8q-5 2-9-.5Z" fill="#8fc640" />
        <path d="M15.500 749q4.500-2.500 8.500 0l-1.500 7.500q-4-2-8.500.5Z" fill="#4aa8e0" />
        <path d="M25.500 749q4.500 2.500 9 .5l-1.500 7.500q-4.500 2-9-.5Z" fill="#fcc523" />
        <path d="M11 744a17 17 0 0 1 32 0q-16 6-32 0Z" fill="#fff" opacity=".22" />
        <Frame x={60} w={53} stack={1} />
        <path d="M72 737l3-2h10l2 2h11q3 0 3 3v20H71Z" fill="#e4c568" />
        <path d="M74 736h7v4h-7ZM82 738h9v4h-9ZM89 739h10v4H89Z" fill="#fff" />
        <path d="M75 736h3v2h-3Z" fill="#29a629" /><path d="M84 738h4v2h-4Z" fill="#d22" /><path d="M91 740h3v2h-3Z" fill="#26c" />
        <path d="M70 742h12l2 2h18v17q0 2-2 2H72q-2 0-2-2Z" fill="#fbe9a3" stroke="#c9a94f" />
        <path d="M75 764v-9q0-3 3-3h16q3 0 3 3v9h-5v-6H80v6Z" fill="#a5dcf3" stroke="#4ba0c6" />
        <path d="M144 738l17-1 2 23-16 2Z" fill="#72abd0" stroke="#4f88b4" /><path d="M137.500 738.500h21v21h-21Z" fill="#a8d2ea" stroke="#5f9cc4" />
        <circle cx="147" cy="749" r="8.500" fill="#f27a1d" stroke="#cfd8e0" /><path d="M144 743.500v11l8-5.500Z" fill="#fff" />
        <path d="M214 740.500c6 0 9.500 4 9.500 9.500h-19M223 756c-5 6-18.500 5-18.500-7 0-5 4-8.500 9.500-8.500" stroke="#2b96d6" strokeWidth="6" />
        <path d="M214 739.500c6 0 9.500 4 9.500 9.500h-18" stroke="#69c8f2" strokeWidth="2" />
        <path d="M201 761c-5-6 8-23 19-26 6-1.500 8 2 4 9" stroke="#f2b71f" strokeWidth="3" />
        <rect x="274" y="738" width="14" height="22" fill="#fff" stroke="#80397b" strokeWidth="1.500" />
        <path d="M278 742h7M278 746h7M278 750h7M278 754h7M288 742h2v4h-2M288 749h2v4h-2" stroke="#80397b" strokeWidth="1.500" />
        <path d="M260 736l18-3v31l-18-3Z" fill="#80397b" /><text x="263.500" y="754" fill="#fff" fontSize="14" className={glyph}>N</text>
      </Draw>
      <Draw x={308} y={729} w={310} h={38} className="relative">
        <Frame x={308} w={50} dark stack={2} />
        <path d="M341.500 731.500q2 9-2.500 16t-12 10q-1-8 3-14t11.500-12Z" fill="#c9ccd0" />
        <path d="M340 733L321 763" stroke="#888e96" /><path d="M329 746l10-3M327 750l10-3M331 741l9-3M326 754l8-3" stroke="#6d7278" strokeWidth=".8" />
        <Frame x={370} w={57} dark />
        <path d="M391 734h24v28h-24Z" fill="#21a366" /><path d="M403 734h12v9h-12Z" fill="#33c481" /><path d="M391 743h12v10h-12ZM391 753h12v9h-12Z" fill="#107c41" /><path d="M403 753h12v9h-12Z" fill="#185c37" />
        <path d="M383 740h17v17h-17Z" fill="#107c41" /><text x="387" y="753.500" fill="#fff" fontSize="14" className={glyph}>X</text>
        <path d="M455 734h20v26h-20Z" fill="#0f78d4" /><path d="M462 737h6v6h-6Z" fill="#28a8ea" /><path d="M468 737h7v6h-7Z" fill="#50d9ff" /><path d="M453 748l24 0v12q0 2-2 2h-22Z" fill="#1a93dc" /><path d="M453 750l12 7 12-9v13q0 1-2 1h-20q-2 0-2-2Z" fill="#35b8f1" />
        <path d="M445 740h17v17h-17Z" fill="#0f78d4" /><text x="448" y="753.500" fill="#fff" fontSize="14" className={glyph}>O</text>
        <circle cx="525" cy="748" r="14" fill="#ed6c47" /><path d="M525 734a14 14 0 0 1 14 14h-14Z" fill="#ff8f6b" /><path d="M511 748h28a14 14 0 0 1-28 0Z" fill="#d35230" />
        <path d="M507 740h17v17h-17Z" fill="#c43e1c" /><text x="511" y="753.500" fill="#fff" fontSize="14" className={glyph}>P</text>
        <path d="M577 734h24v7h-24Z" fill="#41a5ee" /><path d="M577 741h24v7h-24Z" fill="#2b7cd3" /><path d="M577 748h24v7h-24Z" fill="#185abd" /><path d="M577 755h24v7h-24Z" fill="#103f91" />
        <path d="M569 740h17v17h-17Z" fill="#185abd" /><text x="571" y="753.500" fill="#fff" fontSize="13.500" className={glyph}>W</text>
      </Draw>
      <Draw x={618} y={729} w={310} h={38} className="relative">
        <Frame x={618} w={50} stack={2} />
        <circle cx="643" cy="748" r="14.500" fill="#fbc937" />
        <path d="M643 748L630.400 740.800A14.500 14.500 0 0 0 643 762.500L649.300 751.600Z" fill="#1e9d58" />
        <path d="M630.400 740.800A14.500 14.500 0 0 1 655.600 740.800H643L636.700 751.600Z" fill="#dd4b3e" />
        <circle cx="643" cy="748" r="6.800" fill="#fff" /><circle cx="643" cy="748" r="5.300" fill="#4688f1" />
        <Frame x={680} w={58} />
        <rect x="693" y="732" width="32" height="31" rx="3" fill="#28333d" /><circle cx="708.500" cy="747.500" r="9.500" stroke="#fbb71b" strokeWidth="3" /><path d="M703 745l5 6 12-15-11 19q-1 1-2 0Z" fill="#fff" stroke="#fff" />
        <circle cx="717" cy="756" r="8" fill="#f58410" /><path d="M715.500 750.500h3l-.8 6.500h-1.400Z" fill="#fff" /><circle cx="717" cy="759.800" r="1.500" fill="#fff" />
        <Frame x={741} w={51} stack={2} />
        <path d="M752 736h30v23h-30Z" fill="#aaa" /><path d="M754 738h26v19h-26Z" fill="#222" /><path d="M751 758h32v3h-32Z" fill="#777" /><text x="756" y="746.500" fill="#ccc" fontSize="6.500" className="font-['Liberation_Mono']">C:\_</text>
        <Frame x={804} w={51} stack={1} />
        <path d="M814 733h30v29h-30Z" fill="#fdfdfd" stroke="#c5cdd5" />
        <TableauCross cx={828.500} cy={747.500} s={3.700} w={1.300} colors={['#35789f']} />
        <Frame x={866} w={50} stack={2} />
        <path d="M878 736h26v23h-26Z" fill="#f4f8fb" stroke="#7fa5c0" /><path d="M879 737h24v19h-24Z" fill="#a9d6f5" /><path d="M879 743q6-4 11-1t13-2v8h-24Z" fill="#eaf5fb" /><path d="M879 745q8-3 12 1t12 2v3h-24Z" fill="#3d7d46" /><path d="M879 750h24v7h-24Z" fill="#5aa2c2" />
        <path d="M877.500 741v-6.500h6.500M898 734.500h6.500v6.500M904.500 753v6.500h-6.500M884 759.500h-6.500V753" stroke="#2f78b4" strokeWidth="3.500" />
      </Draw>
      <Draw x={928} y={729} w={356} h={38} className="relative">
        <Frame x={928} w={58} />
        <path d="M965 732l8 4v24l-8 4-24-22 4-3 20 16Z" fill="#1f8ad2" /><path d="M965 732l8 4v24l-8 4Z" fill="#2fa8f1" /><path d="M941 754l24-22v9l-20 16Z" fill="#0f70b7" />
        <path d="M1188 751.500l4.500-5 4.500 5Z" fill="#fff" stroke="#5c7590" strokeWidth=".8" />
        <path d="M1210.500 741v16M1212 742.500q4-2 6 .5t6 0l-2 7q-3 1.500-5 0t-5 0Z" fill="#fff" stroke="#3f536a" strokeWidth="1.200" />
        <path d="M1211.500 742v14" stroke="#fff" strokeWidth="1.500" />
        <path d="M1235.500 746h3l4-4.500v14l-4-4.500h-3Z" fill="#fff" stroke="#3f536a" /><path d="M1244.500 745q2 3.500 0 7M1246.500 743.500q3 5 0 10" stroke="#fff" strokeWidth="1.200" />
        <path d="M1258.500 742.500h8v13h-8Z" fill="#5c7590" stroke="#3f536a" strokeWidth="3.600" /><path d="M1258.500 742.500h8v13h-8Z" fill="#6f8aa6" stroke="#fff" strokeWidth="1.800" />
        <path d="M1264.500 745.500h8v5q-1 3-4 3.500-3-.5-4-3.500Z" fill="#fff" stroke="#3f536a" /><path d="M1266.500 741.500v4M1270.500 741.500v4M1268.500 754v3h-4" stroke="#fff" strokeWidth="1.500" />
      </Draw>
      <div className="relative flex w-[68px] flex-col items-center pt-[3px] pr-[6px] font-['Open_Sans'] text-[11.500px] leading-[17px] tracking-[-0.150px] text-white">
        <span>1:13 PM</span>
        <span className="tracking-[-0.250px]">11/12/2019</span>
      </div>
      <div className="relative flex-1 border-l border-[#3e5166] bg-linear-to-b from-[#b9cde2] via-[#61809f] to-[#86a7c8] shadow-[inset_1px_1px_0_#c3d5e8]" />
    </div>
  );
}

export default function App() {
  return (
    <div className="flex h-[767px] w-[1365px] flex-col overflow-hidden bg-[#f5f5f5]">
      <TitleBar />
      <MenuBar />
      <Toolbar />
      <div className="flex h-[594px] shrink-0">
        <DataPane />
        <Cards />
        <div className="ml-[6px] flex flex-col">
          <Shelves />
          <div className="flex items-start">
            <Sheet />
            <Legend />
          </div>
        </div>
      </div>
      <Tabs />
      <StatusBar />
      <Taskbar />
    </div>
  );
}
